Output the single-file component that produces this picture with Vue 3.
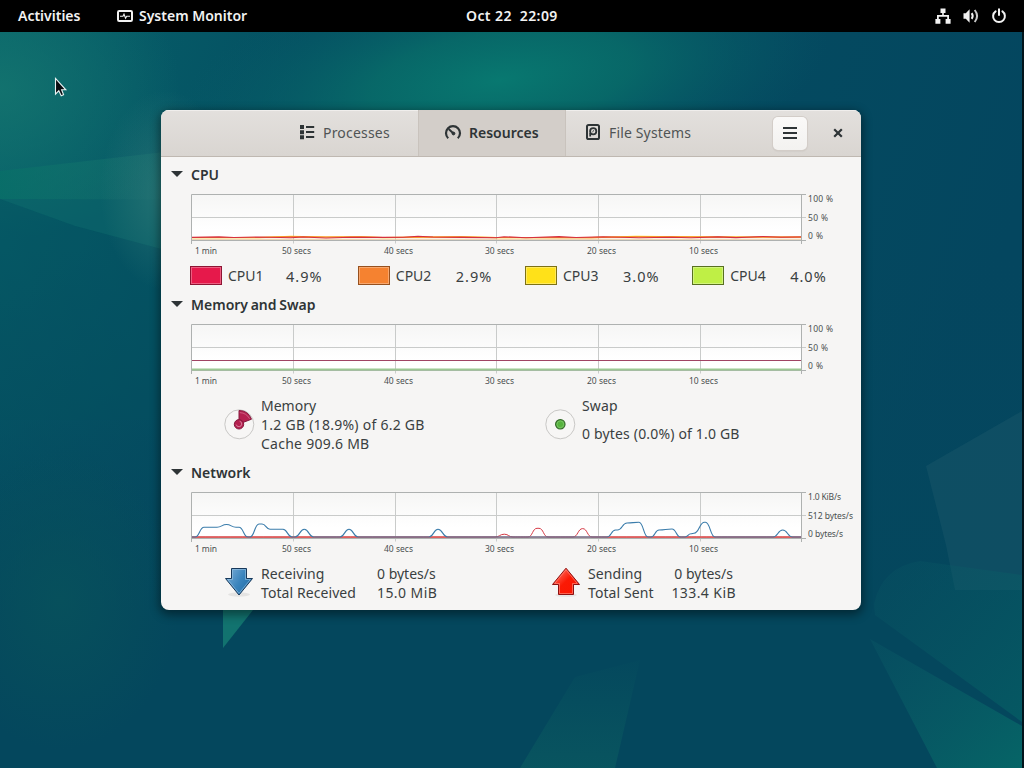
<script setup>
const cpus = [
  { name: 'CPU1', value: '4.9%', color: '#e6194b', border: '#8d1433' },
  { name: 'CPU2', value: '2.9%', color: '#f58230', border: '#96501e' },
  { name: 'CPU3', value: '3.0%', color: '#ffe119', border: '#7d7114' },
  { name: 'CPU4', value: '4.0%', color: '#bfef45', border: '#587020' },
];

const gridX = [132.5, 234.5, 335.5, 437.5, 539.5];
const timeLabels = [
  { x: 34, text: '1 min', w: 22 },
  { x: 121, text: '50 secs', w: 29 },
  { x: 223, text: '40 secs', w: 29 },
  { x: 324, text: '30 secs', w: 29 },
  { x: 426, text: '20 secs', w: 29 },
  { x: 528, text: '10 secs', w: 29 },
];

const BASE = 47;

// Joins the samples with curves that are flat at every sample.
function smooth(points) {
  let d = `M${points[0][0]} ${points[0][1]}`;
  for (let i = 1; i < points.length; i += 1) {
    const [x0, y0] = points[i - 1];
    const [x1, y1] = points[i];
    const mid = (x0 + x1) / 2;
    d += `C${mid} ${y0} ${mid} ${y1} ${x1} ${y1}`;
  }
  return d;
}

const receiving = smooth([
  [31, BASE], [34, BASE], [43, 37.3], [56, 37.3], [65.5, 34.5], [75, 37.3], [78, 37.3], [87, BASE], [89, BASE],
  [98, 34], [101, 34], [109, 39.3], [122, 39.3], [131, BASE], [134, BASE], [143.3, 39.3], [152.5, BASE],
  [179, BASE], [188, 39.3], [197, BASE], [268, BASE], [277, 39.3], [286.5, BASE], [446, BASE], [454.5, 40],
  [456.5, 40], [466, 33], [478, 32.3], [487, BASE], [490, BASE], [498, 40], [511, 39], [519.5, BASE],
  [524, BASE], [530, 43.7], [533, 43.2], [543.5, 32.3], [544.5, 32.3], [554, BASE], [612, BASE], [621.7, 40],
  [631.5, BASE], [640, BASE],
]);

const sending = smooth([
  [31, BASE], [334, BASE], [343.3, 44.2], [352, BASE], [367, BASE], [376, 38.3], [378, 38.3], [387, BASE],
  [412, BASE], [421.7, 38.6], [431, BASE], [640, BASE],
]);

const cpuLines = [
  { color: '#e9c9a0', d: 'M31 47.3H640' },
  { color: '#ffd719', d: 'M31 45.6 L98 45.6 L130 44.4 L165 45 L200 44.8 L222 45.6 L300 44.8 L335 45.6 L430 45.6 L475 44.4 L500 44.6 L540 44.9 L600 45 L640 45.2' },
  { color: '#f58230', d: 'M31 45.5 L98 45.5 L130 44.6 L165 45 L200 44.8 L222 45.5 L300 44.9 L335 45.5 L430 45.6 L475 44.8 L510 44.8 L590 45.2 L640 44.9' },
  { color: '#d5303f', d: 'M31 45.4 L58 44.9 L73 45.5 L98 45 L130 45.8 L142 45 L165 46 L190 45.2 L222 45.4 L242 45.3 L257 44.2 L272 45 L300 45.4 L335 45.8 L343 44.7 L365 45.7 L398 44.6 L415 45.5 L442 44.8 L478 45.8 L510 45.2 L530 45.8 L557 44.9 L575 45.6 L602 44.5 L620 45.2 L640 45' },
];

const sections = [
  { id: 'cpu', title: 'CPU', scale: ['100 %', '50 %', '0 %'], widths: [25, 20, 15] },
  { id: 'memory', title: 'Memory and Swap', scale: ['100 %', '50 %', '0 %'], widths: [25, 20, 15] },
  { id: 'network', title: 'Network', scale: ['1.0 KiB/s', '512 bytes/s', '0 bytes/s'], widths: [33, 45, 35] },
];
</script>

<template>
  <div class="desktop">
    <svg class="wallpaper" viewBox="0 0 1024 768" preserveAspectRatio="none">
      <defs>
        <linearGradient id="wp-base" x1="0" y1="0" x2="1" y2="0.25">
          <stop offset="0" stop-color="#07626a" />
          <stop offset="0.3" stop-color="#045062" />
          <stop offset="1" stop-color="#04465f" />
        </linearGradient>
        <radialGradient id="wp-corner" gradientUnits="userSpaceOnUse" cx="0" cy="0" r="1" gradientTransform="translate(0 90) scale(180 150)">
          <stop offset="0" stop-color="#14756f" stop-opacity="0.85" />
          <stop offset="1" stop-color="#14756f" stop-opacity="0" />
        </radialGradient>
        <radialGradient id="wp-top" gradientUnits="userSpaceOnUse" cx="0" cy="0" r="1" gradientTransform="translate(500 80) rotate(-8) scale(330 120)">
          <stop offset="0" stop-color="#087870" />
          <stop offset="0.4" stop-color="#086c69" stop-opacity="0.85" />
          <stop offset="1" stop-color="#075a68" stop-opacity="0" />
        </radialGradient>
        <radialGradient id="wp-glow" gradientUnits="userSpaceOnUse" cx="0" cy="0" r="1" gradientTransform="translate(165 190) scale(65 100)">
          <stop offset="0" stop-color="#3f8780" stop-opacity="0.5" />
          <stop offset="1" stop-color="#3f8780" stop-opacity="0" />
        </radialGradient>
        <linearGradient id="wp-beam" x1="0" y1="0" x2="1" y2="0">
          <stop offset="0" stop-color="#087068" />
          <stop offset="1" stop-color="#1b7770" stop-opacity="0.4" />
        </linearGradient>
        <linearGradient id="wp-leaf" x1="0" y1="0" x2="1" y2="1">
          <stop offset="0" stop-color="#0b5966" stop-opacity="0.4" />
          <stop offset="1" stop-color="#066a68" />
        </linearGradient>
        <linearGradient id="wp-low" x1="0" y1="0" x2="0" y2="1">
          <stop offset="0" stop-color="#05475f" stop-opacity="0" />
          <stop offset="0.7" stop-color="#04475d" />
        </linearGradient>
        <radialGradient id="wp-left" gradientUnits="userSpaceOnUse" cx="0" cy="0" r="1" gradientTransform="translate(60 600) scale(120 150)">
          <stop offset="0" stop-color="#07505c" />
          <stop offset="1" stop-color="#07505c" stop-opacity="0" />
        </radialGradient>
        <linearGradient id="wp-petal" x1="0" y1="0" x2="0" y2="1">
          <stop offset="0" stop-color="#0a5960" stop-opacity="0.1" />
          <stop offset="1" stop-color="#0a5960" />
        </linearGradient>
      </defs>
      <rect width="1024" height="768" fill="url(#wp-base)" />
      <rect y="250" width="1024" height="518" fill="url(#wp-low)" />
      <rect y="450" width="200" height="318" fill="url(#wp-left)" />
      <rect width="300" height="260" fill="url(#wp-corner)" />
      <rect x="160" y="32" width="700" height="170" fill="url(#wp-top)" />
      <path d="M0 171L165 152V200L0 199z" fill="url(#wp-beam)" opacity="0.75" />
      <path d="M0 199L165 200V250L75 226z" fill="#0c6469" opacity="0.6" />
      <path d="M0 199L75 226L165 250V420H0z" fill="#04505f" opacity="0.45" />
      <rect x="80" y="80" width="170" height="220" fill="url(#wp-glow)" />
      <path d="M926 466L1022 411V590H955L946 545z" fill="#155367" opacity="0.6" />
      <path d="M874 604Q882 567 920 561L1022 575V722L875 615z" fill="url(#wp-leaf)" opacity="0.5" />
      <path d="M870 639L1022 726V768H937z" fill="url(#wp-leaf)" opacity="0.85" />
      <path d="M223 610H253L223 648z" fill="#12736f" />
      <path d="M575 677L640 660L615 768H520z" fill="url(#wp-petal)" opacity="0.75" />
      <rect x="1022" y="32" width="2" height="736" fill="#02151c" />
    </svg>

    <header class="topbar">
      <span class="activities">Activities</span>
      <span class="app-name">
        <svg width="16" height="12" viewBox="0 0 16 12">
          <rect x="1" y="1" width="14" height="10" rx="1.2" fill="none" stroke="#f2f2f2" stroke-width="2" />
          <path d="M3 6.3H6L7 4.2L8.6 8.3L9.7 6.3H13" fill="none" stroke="#f2f2f2" stroke-width="1.1" />
        </svg>
        <span>System Monitor</span>
      </span>
      <span class="clock"><span>Oct 22</span><span>22:09</span></span>
      <span class="status">
        <svg width="16" height="16" viewBox="0 0 16 16" fill="#f2f2f2">
          <path d="M5.5 0.5h5v4.6H8.8V7H14v4h1.6v4.7h-5V11h1.6V8.8H3.8V11h1.6v4.7h-5V11H2V7h5.2V5.1H5.5z" />
        </svg>
        <svg width="16" height="16" viewBox="0 0 16 16">
          <path d="M0.5 5.2H2.8L6.6 1.2V14.8L2.8 10.8H0.5z" fill="#f2f2f2" />
          <path d="M8.7 5.2Q10.7 8 8.7 10.8" fill="none" stroke="#f2f2f2" stroke-width="2" />
          <path d="M11.7 2Q16.5 8 11.7 14" fill="none" stroke="#c9c9c9" stroke-width="2" />
        </svg>
        <svg width="16" height="16" viewBox="0 0 16 16" fill="none" stroke="#f2f2f2" stroke-width="2" stroke-linecap="round">
          <path d="M4.6 3.4A5.9 5.9 0 1 0 11.4 3.4M8 1.2V7" />
        </svg>
      </span>
    </header>

    <main class="window">
      <div class="titlebar">
        <div class="tab tab--processes">
          <svg width="16" height="16" viewBox="0 0 16 16" fill="#2e3436">
            <path d="M1 1h4v4h-4zM1 6.2h4v4h-4zM1 11.2h4v4h-4zM7 2h8.2v2H7zM7 7h8.2v2H7zM7 12h8.2v2H7z" />
          </svg>
          <span>Processes</span>
        </div>
        <div class="tab tab--active">
          <svg width="18" height="16" viewBox="0 0 18 16" fill="none" stroke="#2e3436">
            <path d="M4.2 14.2A7 7 0 1 1 13.8 14.2" stroke-width="2.2" />
            <path d="M5.2 5.4L9.2 9.2" stroke-width="2" stroke-linecap="round" />
            <circle cx="9.5" cy="9.5" r="1.4" fill="#2e3436" />
          </svg>
          <span>Resources</span>
        </div>
        <div class="tab tab--files">
          <svg width="16" height="16" viewBox="0 0 16 16" fill="none" stroke="#2e3436" stroke-width="2">
            <rect x="2" y="1" width="12" height="14" rx="1.6" />
            <circle cx="8.2" cy="7.2" r="3.1" stroke-width="1.8" />
            <path d="M5.2 12.4V9" stroke-width="1.8" />
            <path d="M7.4 7.9L9 6.4" stroke-width="1" />
          </svg>
          <span>File Systems</span>
        </div>
        <button class="menu" type="button" aria-label="Menu">
          <svg width="14" height="12" viewBox="0 0 14 12" fill="#2e3436">
            <path d="M0 0h14v2H0zM0 5h14v2H0zM0 10h14v2H0z" />
          </svg>
        </button>
        <button class="close" type="button" aria-label="Close">
          <svg width="10" height="10" viewBox="0 0 10 10" fill="none" stroke="#2e3436" stroke-width="2.2">
            <path d="M1.2 1.2L8.8 8.8M8.8 1.2L1.2 8.8" />
          </svg>
        </button>
      </div>

      <section v-for="s in sections" :key="s.id">
        <h2 class="heading">
          <svg width="12" height="6" viewBox="0 0 12 6"><path d="M0 0H12L6 6z" fill="#2e3436" /></svg>
          <span :class="{ tight: s.id === 'memory' }">{{ s.title }}</span>
        </h2>

        <svg class="chart" width="700" height="68" viewBox="0 0 700 68">
          <defs>
            <linearGradient :id="'bg-' + s.id" x1="0" y1="0" x2="0" y2="1">
              <stop offset="0" stop-color="#f6f6f5" />
              <stop offset="0.75" stop-color="#ffffff" />
            </linearGradient>
          </defs>
          <rect x="31" y="3" width="609" height="46" :fill="`url(#bg-${s.id})`" />
          <g stroke="#c9cbca" fill="none">
            <path d="M31 25.5H645" />
            <path v-for="x in gridX" :key="x" :d="`M${x} 3V51.5`" />
          </g>
          <path d="M30.5 52V2.5H645M640.5 2.5V52M30.5 48.5H645" fill="none" stroke="#aeb1b0" />

          <g v-if="s.id === 'cpu'" fill="none" stroke-width="1.1">
            <path v-for="line in cpuLines" :key="line.color" :d="line.d" :stroke="line.color" />
          </g>
          <g v-else-if="s.id === 'memory'" fill="none">
            <path d="M31 38.5H640" stroke="#a04464" />
            <path d="M31 47.5H640" stroke="#9cc794" stroke-width="2" />
          </g>
          <g v-else fill="none">
            <path d="M31 47.2H640" stroke="#e58378" stroke-width="1.8" />
            <path :d="sending" stroke="#d63a45" />
            <path :d="receiving" stroke="#3a7cab" stroke-width="1.1" />
          </g>

          <g class="labels">
            <text v-for="t in timeLabels" :key="t.x" :x="t.x" y="62" :textLength="t.w">{{ t.text }}</text>
            <text v-for="(t, i) in s.scale" :key="t" x="647" :y="[10, 29, 47][i]" :textLength="s.widths[i]">{{ t }}</text>
          </g>
        </svg>

        <div v-if="s.id === 'cpu'" class="cpu-row">
          <div v-for="c in cpus" :key="c.name" class="cpu">
            <span class="swatch" :style="{ background: c.color, borderColor: c.border }"></span>
            <span>{{ c.name }}</span>
            <span class="cpu-value">{{ c.value }}</span>
          </div>
        </div>

        <div v-else-if="s.id === 'memory'" class="mem-row">
          <div class="mem">
            <svg width="32" height="32" viewBox="0 0 32 32">
              <circle cx="16.3" cy="16.3" r="14.5" fill="#f7f6f5" stroke="#c9c8c6" />
              <path d="M16 16V2.5A13.5 13.5 0 0 1 28.5 11.2z" fill="#b5204f" stroke="#861a3e" />
              <path d="M16.8 4.6A11.7 11.7 0 0 1 26.6 10.8" fill="none" stroke="#d36c8c" stroke-width="0.8" />
              <circle cx="16" cy="16.3" r="4.7" fill="#b5204f" stroke="#861a3e" />
              <path d="M13.2 16.6A2.8 2.8 0 1 0 16.6 13.2" fill="none" stroke="#e098ae" stroke-width="0.8" />
            </svg>
            <div class="lines">
              <span>Memory</span>
              <span class="wide">1.2 GB (18.9%) of 6.2 GB</span>
              <span class="wide">Cache 909.6 MB</span>
            </div>
          </div>
          <div class="mem">
            <svg width="32" height="32" viewBox="0 0 32 32">
              <circle cx="16.3" cy="16.3" r="14.5" fill="#f7f6f5" stroke="#c9c8c6" />
              <circle cx="16.3" cy="16.3" r="4.7" fill="#56b33e" stroke="#35692b" stroke-width="1.2" />
              <circle cx="16.3" cy="16.3" r="3.4" fill="none" stroke="#8fd07c" stroke-width="0.6" />
            </svg>
            <div class="lines lines--spread">
              <span>Swap</span>
              <span>0 bytes (0.0%) of 1.0 GB</span>
            </div>
          </div>
        </div>

        <div v-else class="net-row">
          <div class="net">
            <svg width="32" height="32" viewBox="0 0 32 32">
              <defs>
                <linearGradient id="down" x1="0" y1="0" x2="1" y2="0.6">
                  <stop offset="0" stop-color="#82b1d8" />
                  <stop offset="0.6" stop-color="#3a84bd" />
                  <stop offset="1" stop-color="#2470aa" />
                </linearGradient>
              </defs>
              <ellipse cx="16" cy="28.5" rx="11" ry="2.2" fill="#000" opacity="0.07" />
              <path d="M8.5 2.5H23.5V12.5H29.5L16 29L2.5 12.5H8.5z" fill="url(#down)" stroke="#17385a" />
              <path d="M9.5 3.5H22.5V13.5H27.3L16 27.4L4.7 13.5H9.5z" fill="none" stroke="#9cc4e2" stroke-opacity="0.6" />
            </svg>
            <div class="lines labels-col">
              <span>Receiving</span>
              <span>Total Received</span>
            </div>
            <div class="lines">
              <span>0 bytes/s</span>
              <span class="wider">15.0 MiB</span>
            </div>
          </div>
          <div class="net net--sending">
            <svg width="32" height="32" viewBox="0 0 32 32">
              <defs>
                <linearGradient id="up" x1="0" y1="0" x2="1" y2="1">
                  <stop offset="0.2" stop-color="#ff5f4e" />
                  <stop offset="0.5" stop-color="#fb1a05" />
                  <stop offset="1" stop-color="#fa1500" />
                </linearGradient>
              </defs>
              <ellipse cx="16" cy="29" rx="11" ry="2" fill="#000" opacity="0.06" />
              <path d="M16 2.2L29.5 18.5H23.5V28.5H8.5V18.5H2.5z" fill="url(#up)" stroke="#8d1010" />
              <path d="M16 3.8L27.3 17.5H22.5V27.5H9.5V17.5H4.7z" fill="none" stroke="#ff8b7d" stroke-opacity="0.65" />
            </svg>
            <div class="lines labels-col">
              <span>Sending</span>
              <span>Total Sent</span>
            </div>
            <div class="lines lines--end">
              <span class="zero-rate">0 bytes/s</span>
              <span class="wider">133.4 KiB</span>
            </div>
          </div>
        </div>
      </section>
    </main>

    <svg class="pointer" width="14" height="21" viewBox="0 0 14 21">
      <path d="M1.5 1.5V17.2L4.8 13.8L7.2 18.8L9.6 17.8L7.6 12.8H11.8z" fill="#0a0c10" stroke="#e8f2f2" stroke-width="1.1" />
    </svg>
  </div>
</template>

<style>
body {
  margin: 0;
  overflow: hidden;
}
</style>

<style scoped>
.desktop {
  position: relative;
  width: 1024px;
  height: 768px;
  overflow: hidden;
  color: #3a3f41;
  font-family: "Noto Sans", "Open Sans", sans-serif;
  font-size: 14px;
}

svg {
  display: block;
  flex: none;
}

.wallpaper {
  position: absolute;
  inset: 0;
  width: 1024px;
  height: 768px;
}

.topbar {
  position: relative;
  display: flex;
  align-items: center;
  box-sizing: border-box;
  height: 32px;
  padding: 0 17px 0 18px;
  background: #000;
  color: #f2f2f2;
  font-weight: 600;
  white-space: nowrap;
}

.topbar > span > span,
.activities,
.tab span {
  padding-bottom: 2px;
}

.activities {
  width: 99px;
}

.app-name {
  display: flex;
  align-items: center;
  gap: 6px;
  width: 349px;
}

.clock {
  display: flex;
  gap: 8px;
  letter-spacing: 0.4px;
}

.status {
  display: flex;
  gap: 12px;
  margin-left: auto;
}

.window {
  position: relative;
  width: 700px;
  height: 500px;
  margin: 78px 0 0 161px;
  overflow: hidden;
  border-radius: 8px;
  background: #f6f5f4;
  box-shadow: 0 3px 10px 2px rgba(0, 0, 0, 0.42);
  white-space: nowrap;
}

.titlebar {
  display: flex;
  align-items: center;
  box-sizing: border-box;
  height: 47px;
  border-bottom: 1px solid #bfb8b1;
  background: linear-gradient(to bottom, #e3e0dd, #d9d5d1);
  box-shadow: inset 0 1px #f0eeec;
}

.tab {
  display: flex;
  align-items: center;
  box-sizing: border-box;
  height: 46px;
  color: #505455;
}

.tab svg {
  margin-bottom: 2px;
}

.tab--processes {
  gap: 8px;
  width: 257px;
  padding-left: 138px;
  letter-spacing: 0.2px;
}

.tab--active {
  gap: 7px;
  width: 148px;
  padding-left: 25px;
  border: solid #c9c3bd;
  border-width: 0 1px;
  background: #d3cec9;
  color: #2e3436;
  font-weight: 600;
}

.tab--files {
  gap: 8px;
  width: 207px;
  padding-left: 19px;
  letter-spacing: 0.15px;
}

.menu,
.close {
  display: flex;
  align-items: center;
  justify-content: center;
  width: 34px;
  height: 33px;
  padding: 0;
  border: 0;
  background: none;
}

.menu {
  border-radius: 5px;
  background: linear-gradient(to bottom, #faf9f8, #f3f2f0);
  box-shadow: 0 0 0 1px #d3cdc8, 0 1px 2px rgba(0, 0, 0, 0.12);
}

.close {
  margin-left: 14px;
}

.heading {
  display: flex;
  align-items: center;
  gap: 8px;
  height: 35px;
  margin: 0;
  padding-left: 10px;
  color: #2e3436;
  font-size: 14px;
  font-weight: 600;
}

.heading svg {
  margin-bottom: 2px;
}

.tight {
  word-spacing: -1px;
}

.labels {
  fill: #4a4f50;
  font-size: 8.5px;
}

.cpu-row {
  display: flex;
  box-sizing: border-box;
  height: 27px;
  padding: 4px 0 0 29px;
}

.cpu {
  display: flex;
  flex: none;
  align-items: center;
  gap: 6px;
  width: 136px;
  height: 23px;
  margin-right: 31.2px;
}

.cpu:first-child {
  width: 134px;
  margin-right: 33.8px;
}

.swatch {
  box-sizing: border-box;
  width: 32px;
  height: 19px;
  border: 1px solid;
  box-shadow: inset 0 0 0 1px rgba(255, 255, 255, 0.3);
}

.cpu-value {
  width: 38px;
  margin-left: auto;
  font-size: 14.5px;
  letter-spacing: 1px;
}

.lines {
  display: flex;
  flex-direction: column;
  line-height: 19px;
}

.lines--spread {
  gap: 9px;
  letter-spacing: 0.17px;
}

.lines--end {
  align-items: flex-end;
}

.wide {
  letter-spacing: 0.26px;
}

.wider {
  letter-spacing: 0.42px;
}

.mem-row {
  display: flex;
  box-sizing: border-box;
  height: 65px;
  padding: 6px 0 0 62px;
}

.mem {
  display: flex;
  flex: none;
  align-items: flex-start;
  gap: 6px;
  width: 321px;
}

.mem svg {
  margin-top: 12px;
}

.net-row {
  display: flex;
  height: 46px;
  padding: 6px 0 0 62px;
}

.net {
  display: flex;
  flex: none;
  align-items: flex-start;
  gap: 6px;
  width: 327px;
}

.net svg {
  margin-top: 2px;
}

.labels-col {
  width: 110px;
  letter-spacing: 0.08px;
}

.net--sending .labels-col {
  width: 77px;
}

.net--sending .lines--end {
  width: 65px;
}

.zero-rate {
  padding-right: 3px;
}

.pointer {
  position: absolute;
  left: 54px;
  top: 77px;
}
</style>
